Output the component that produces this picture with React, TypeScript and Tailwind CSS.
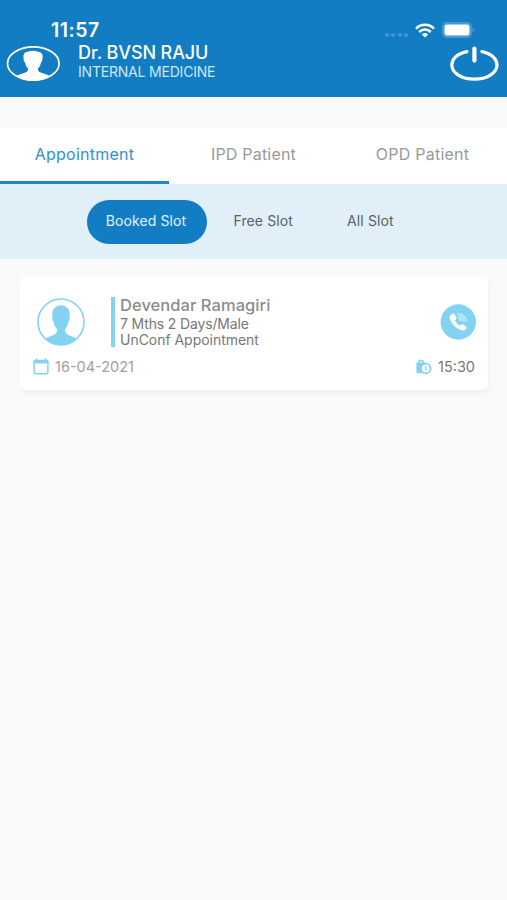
import React from 'react';

interface IconProps {
  className?: string;
}

const tabs = [
  { label: 'Appointment', className: 'border-b-[3px] border-[#2386c8] tracking-[0.25px] text-[#3190cc]' },
  { label: 'IPD Patient', className: 'pb-[3px] tracking-[0.2px] text-[#999999]' },
  { label: 'OPD Patient', className: 'pb-[3px] tracking-[0.25px] text-[#999999]' },
];

const WifiIcon: React.FC<IconProps> = ({ className }) => (
  <svg viewBox="0 0 20 15" className={className} fill="none" stroke="white" strokeWidth="2.5">
    <path d="M1 5.6C6 0.6 14 0.6 19 5.6" />
    <path d="M4.2 9C7.5 5.8 12.5 5.8 15.8 9" />
    <path d="M10 14.6L6.8 11.4Q10 8.8 13.2 11.4Z" fill="white" stroke="none" />
  </svg>
);

const BatteryIcon: React.FC<IconProps> = ({ className }) => (
  <svg viewBox="0 0 33 16" className={className}>
    <rect x="0.8" y="0.8" width="28.4" height="14.4" rx="4" fill="#3c95cf" stroke="#4a9cd1" strokeWidth="1.4" />
    <rect x="2.5" y="2.5" width="25" height="11" rx="2.3" fill="white" />
    <path d="M30.7 5.5Q33 8 30.7 10.5Z" fill="#5ba6d6" />
  </svg>
);

const DoctorIcon: React.FC<IconProps> = ({ className }) => (
  <svg viewBox="0 0 54 36" className={className}>
    <ellipse cx="27.3" cy="17.5" rx="25.8" ry="16.7" fill="none" stroke="white" strokeWidth="1.7" />
    <path
      d="M10 30Q13 28.3 18 27Q22.5 26 22 22.5Q19.5 20.5 19 16.5Q17.2 15.5 17.6 12.5Q16.5 6.5 21 6Q26 4 31.5 5.5Q37.8 6 36.4 12.5Q37 15.5 35 16.5Q34.5 20.5 32 22.5Q31.5 26 36 27Q41 28.3 44 30Q37 34.9 27 34.9T10 30Z"
      fill="white"
    />
  </svg>
);

const PowerIcon: React.FC<IconProps> = ({ className }) => (
  <svg viewBox="0 0 50 36" className={className} fill="none" stroke="white" strokeLinecap="round">
    <path
      d="M17.9 5.6C7.9 7.6 2.8 13.2 2.8 19C2.8 27 12.9 33.2 25.4 33.2S48 27 48 19C48 13.2 42.9 7.6 32.9 5.6"
      strokeWidth="3.2"
    />
    <path d="M25.4 2.6V14.6" strokeWidth="4.2" />
  </svg>
);

const PatientIcon: React.FC<IconProps> = ({ className }) => (
  <svg viewBox="0 0 48 48" className={className}>
    <circle cx="24" cy="24" r="23" fill="none" stroke="#84d2f2" strokeWidth="1.6" />
    <path
      d="M8.5 40.5Q12 38.5 16.5 37Q20.5 35.5 20 31Q17.5 29 16.8 24Q14.8 23 15.4 19Q14.5 7.8 24 7.3Q33.5 7.8 32.6 19Q33.2 23 31.2 24Q30.5 29 28 31Q27.5 35.5 31.5 37Q36 38.5 39.5 40.5Q33 47 24 47T8.5 40.5Z"
      fill="#84d2f2"
    />
  </svg>
);

const CalendarIcon: React.FC<IconProps> = ({ className }) => (
  <svg viewBox="0 0 16 17" className={className}>
    <rect x="1.1" y="2.6" width="13.8" height="13.2" rx="1.5" fill="none" stroke="#84d2f2" strokeWidth="1.5" />
    <path d="M0.8 2.2H15.2V5.6H0.8ZM2.5 0.4H4.5V3H2.5ZM11.5 0.4H13.5V3H11.5Z" fill="#84d2f2" />
  </svg>
);

const CallIcon: React.FC<IconProps> = ({ className }) => (
  <svg viewBox="0 0 36 36" className={className}>
    <circle cx="18.3" cy="18" r="17.7" fill="#84d2f2" />
    <path
      d="M10.2 11.5L12.4 9.8Q13.8 9.2 14.6 10.6L16.4 13.4Q16.8 14.7 15.8 15.5L14.9 16.3Q16.3 19.6 19.6 21.8L21 20.6Q22 19.8 23.2 20.5L26 22.4Q27 23.3 26.3 24.6L24.6 26.2Q23.3 27 20.6 26.1Q12.5 22.8 9.7 14.8Q9.2 12.5 10.2 11.5Z"
      fill="white"
    />
    <path
      d="M17.6 10Q24.8 10 26.4 17.5M18 12.5Q22.7 12.9 24.2 17.4M18.6 14.9Q20.9 15.3 21.8 17.3"
      fill="none"
      stroke="white"
      strokeWidth="1.5"
      opacity="0.6"
    />
  </svg>
);

const BagClockIcon: React.FC<IconProps> = ({ className }) => (
  <svg viewBox="0 0 16 16" className={className}>
    <path d="M0.4 4.4Q0.4 3.4 1.4 3.4H9.6L11 6V14.2H1.6Q0.4 14.2 0.4 13Z" fill="#84d2f2" />
    <path d="M2.8 4.2V3.4Q3 1.2 5 1.2T7.4 3.4V4.2" fill="none" stroke="#84d2f2" strokeWidth="1.5" />
    <circle cx="9.8" cy="9.5" r="4.8" fill="white" stroke="#84d2f2" strokeWidth="1.8" />
    <path d="M9.5 6.8V9.8L11.5 11.4" fill="none" stroke="#84d2f2" strokeWidth="1.2" />
  </svg>
);

const Header = () => (
  <header className="h-[96.5px] bg-[#127dc2] text-white">
    <div className="flex h-[42px] items-center pt-[18px] pr-[32px] pl-[51px]">
      <span className="text-[19.5px] leading-6 font-semibold tracking-[0.5px]">11:57</span>
      <div className="ml-auto flex items-center">
        <div className="mt-[10px] mr-[7px] flex gap-[2.5px]">
          <span className="size-1 rounded-full bg-[#4198d0]" />
          <span className="size-1 rounded-full bg-[#4198d0]" />
          <span className="size-1 rounded-full bg-[#4198d0]" />
          <span className="size-1 rounded-full bg-[#4198d0]" />
        </div>
        <WifiIcon className="mr-[7px] h-[15px] w-5" />
        <BatteryIcon className="h-4 w-[33px]" />
      </div>
    </div>
    <div className="flex pr-[8px] pl-[6px]">
      <DoctorIcon className="mt-[4px] h-9 w-[54px]" />
      <div className="ml-[18px]">
        <h1 className="text-[18px] leading-[21px] font-medium tracking-[-0.1px]">Dr. BVSN RAJU</h1>
        <p className="text-[14px] leading-[17px] tracking-[-0.2px] text-[#cde8f8]">INTERNAL MEDICINE</p>
      </div>
      <PowerIcon className="mt-[4px] ml-auto h-9 w-[50px]" />
    </div>
  </header>
);

const AppointmentCard = () => (
  <article className="mr-[19px] ml-[20px] mt-[17px] h-[114px] rounded-[5px] bg-white shadow-[1px_4px_5px_rgba(0,0,0,0.04)]">
    <div className="flex pt-[21px] pr-[12px] pl-[17px]">
      <PatientIcon className="mt-[1px] size-12" />
      <div className="ml-[26px] h-[50px] w-1 bg-[#84d2f2]" />
      <div className="ml-[5px] text-[14px] leading-[17px] text-[#777777]">
        <h2 className="text-[16.5px] leading-[17px] font-medium tracking-[0.05px] text-[#8c8c8c]">Devendar Ramagiri</h2>
        <p className="mt-[1px] tracking-[-0.15px]">7 Mths 2 Days/Male</p>
        <p className="-mt-[1px] tracking-[-0.03px]">UnConf Appointment</p>
      </div>
      <CallIcon className="mt-[7px] ml-auto size-9" />
    </div>
    <div className="mt-[8.5px] flex items-center pr-[13px] pl-[13px] leading-5">
      <CalendarIcon className="h-[17px] w-4" />
      <span className="ml-[6px] text-[14.5px] text-[#a0a0a0]">16-04-2021</span>
      <BagClockIcon className="mr-[6px] ml-auto size-4" />
      <span className="text-[14.5px] text-[#777777]">15:30</span>
    </div>
  </article>
);

const App: React.FC = () => {
  return (
    <main className="h-[900px] w-[507px] overflow-hidden bg-[#fafafa] font-['Inter',sans-serif]">
      <Header />

      {/* Patient tabs */}
      <nav className="mt-[31px] grid h-[56.5px] grid-cols-3 bg-white text-[16px]">
        {tabs.map((tab) => (
          <button key={tab.label} className={tab.className}>
            {tab.label}
          </button>
        ))}
      </nav>

      {/* Slot filter */}
      <div className="flex h-[75px] items-center bg-[#e1eff8] pl-[86.5px] text-[14px] text-[#596167]">
        <button className="h-[44px] w-[120px] rounded-full bg-[#127dc2] pr-[1px] pb-[2px] tracking-[0.1px] text-[#e4f2fb]">Booked Slot</button>
        <button className="ml-[27px] pb-[2px] tracking-[0.1px]">Free Slot</button>
        <button className="ml-[54px] pb-[2px] tracking-[0.15px]">All Slot</button>
      </div>

      <AppointmentCard />
    </main>
  );
};

export default App;
